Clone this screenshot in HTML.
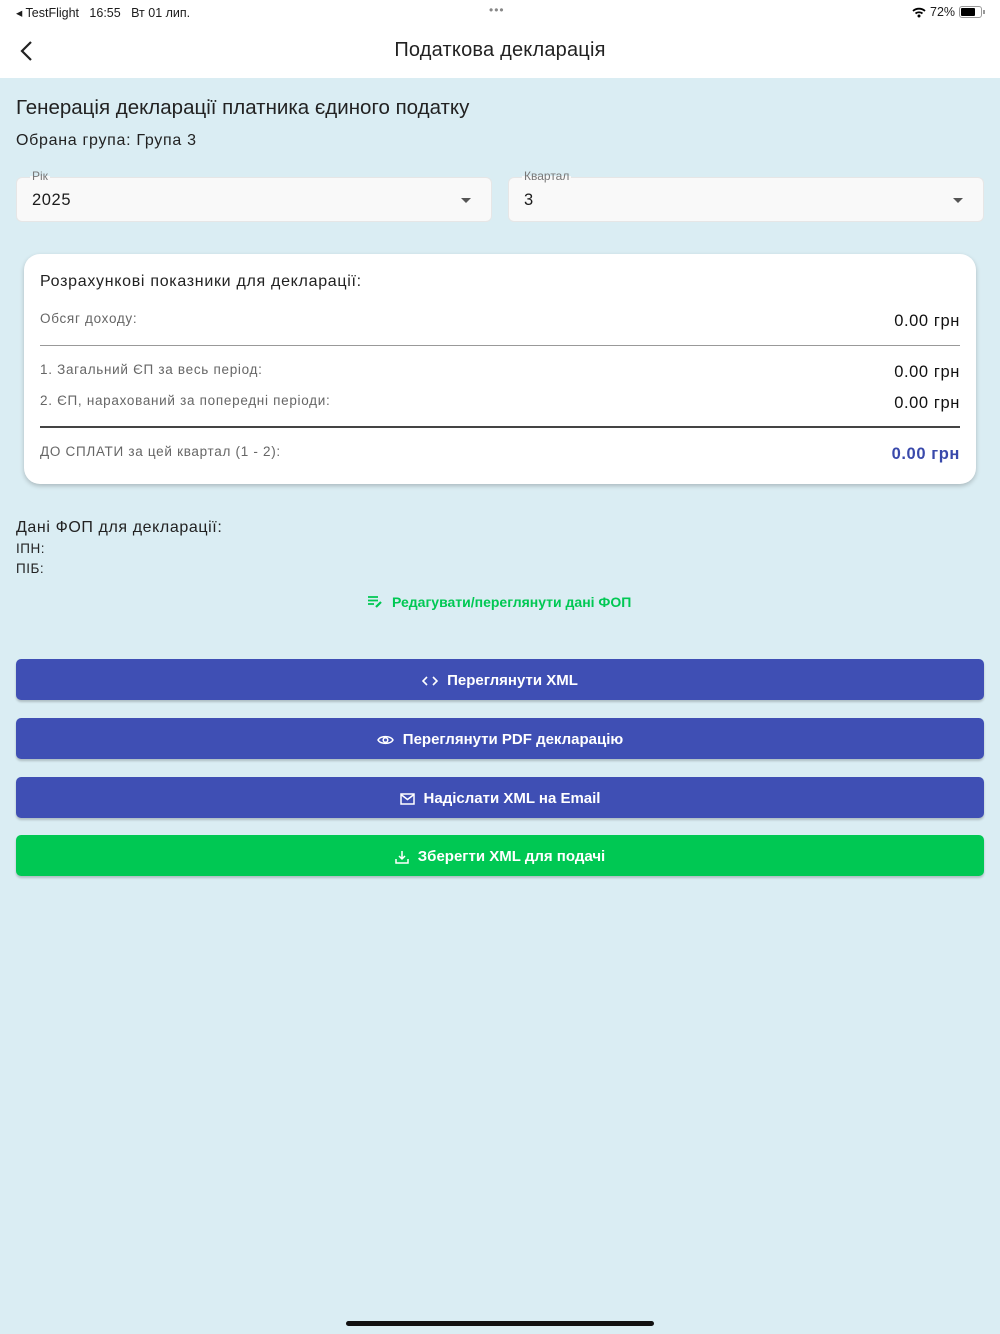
<!DOCTYPE html>
<html><head><meta charset="utf-8">
<style>
*{margin:0;padding:0;box-sizing:border-box}
body{width:1000px;height:1334px;background:#daedf3;font-family:"Liberation Sans","DejaVu Sans",sans-serif;position:relative;overflow:hidden;color:#1c1c1c}
.a{position:absolute;white-space:nowrap}
.hdr{position:absolute;left:0;top:0;width:1000px;height:78px;background:#fff}
.sel{position:absolute;top:177px;height:45px;background:#f9f9f9;border:1px solid #e6e6e6;border-radius:6px}
.lbl{position:absolute;top:-9px;font-size:12px;color:#777;background:linear-gradient(#daedf3 50%,#f9f9f9 50%);padding:0 2px}
.card{position:absolute;left:24px;top:254px;width:952px;height:230px;background:#fff;border-radius:16px;box-shadow:0 2px 5px rgba(0,0,0,.22)}
.btn{position:absolute;left:16px;width:968px;height:41px;border-radius:5px;background:#3f4fb4;color:#fff;font-weight:bold;font-size:15px;display:flex;align-items:center;justify-content:center;gap:9px;box-shadow:0 2px 2px rgba(0,0,0,.2);padding-top:2px}
.r{font-size:16.5px;color:#111;letter-spacing:.6px}
.g{font-size:13.5px;color:#666;letter-spacing:.7px}
</style></head><body>
<div class="hdr"></div>
<div class="a" style="left:16px;top:5px;font-size:12.5px">◂ TestFlight&nbsp;&nbsp; 16:55&nbsp;&nbsp; Вт 01 лип.</div>
<div class="a" style="left:489px;top:3px;font-size:12px;color:#888;letter-spacing:1px">•••</div>
<svg class="a" style="left:912px;top:7px" width="14" height="11" viewBox="0 0 14 11"><path d="M1 4a9 9 0 0 1 12 0M3.5 6.5a5.5 5.5 0 0 1 7 0" stroke="#000" stroke-width="1.8" fill="none"/><circle cx="7" cy="9" r="1.5"/></svg>
<div class="a" style="left:930px;top:5px;font-size:12.5px">72%</div>
<div class="a" style="left:959px;top:6px;width:23px;height:12px;border:1px solid #999;border-radius:3px;padding:1px"><div style="width:14px;height:8px;background:#000;border-radius:1px"></div></div>
<div class="a" style="left:983px;top:10px;width:2px;height:4px;background:#999"></div>
<svg class="a" style="left:20px;top:40px" width="14" height="22" viewBox="0 0 14 22"><path d="M11 2 2 11l9 9" stroke="#222" stroke-width="2.2" fill="none"/></svg>
<div class="a" style="left:0;width:1000px;text-align:center;top:39px;font-size:20px;color:#222;letter-spacing:.2px">Податкова декларація</div>

<div class="a" style="left:16px;top:96px;font-size:20.5px;color:#222">Генерація декларації платника єдиного податку</div>
<div class="a" style="left:16px;top:132px;font-size:16px;color:#222;letter-spacing:.7px">Обрана група: Група 3</div>

<div class="sel" style="left:16px;width:476px"><span class="lbl" style="left:13px">Рік</span><span class="a" style="left:15px;top:13px;font-size:16.5px;letter-spacing:.6px">2025</span><span class="a" style="right:20px;top:20px;border:5px solid transparent;border-top:5px solid #555"></span></div>
<div class="sel" style="left:508px;width:476px"><span class="lbl" style="left:13px">Квартал</span><span class="a" style="left:15px;top:13px;font-size:16.5px">3</span><span class="a" style="right:20px;top:20px;border:5px solid transparent;border-top:5px solid #555"></span></div>

<div class="card">
<div class="a" style="left:16px;top:19px;font-size:16px;color:#222;letter-spacing:.7px">Розрахункові показники для декларації:</div>
<div class="a g" style="left:16px;top:57px">Обсяг доходу:</div>
<div class="a r" style="right:16px;top:58px">0.00 грн</div>
<div class="a" style="left:16px;right:16px;top:91px;height:1px;background:#999"></div>
<div class="a g" style="left:16px;top:108px">1. Загальний ЄП за весь період:</div>
<div class="a r" style="right:16px;top:109px">0.00 грн</div>
<div class="a g" style="left:16px;top:139px">2. ЄП, нарахований за попередні періоди:</div>
<div class="a r" style="right:16px;top:140px">0.00 грн</div>
<div class="a" style="left:16px;right:16px;top:172px;height:2px;background:#444"></div>
<div class="a g" style="left:16px;top:190px">ДО СПЛАТИ за цей квартал (1 - 2):</div>
<div class="a r" style="right:16px;top:191px;color:#3949ab;font-weight:bold">0.00 грн</div>
</div>

<div class="a" style="left:16px;top:519px;font-size:16px;color:#222;letter-spacing:.6px">Дані ФОП для декларації:</div>
<div class="a" style="left:16px;top:541px;font-size:13.5px;color:#222;letter-spacing:.5px">ІПН:</div>
<div class="a" style="left:16px;top:561px;font-size:13.5px;color:#222;letter-spacing:.5px">ПІБ:</div>

<svg class="a" style="left:368px;top:596px" width="16" height="12" viewBox="0 0 16 12"><path d="M0 1h10M0 4.5h10M0 8h6" stroke="#00c853" stroke-width="1.8"/><path d="M8 11l5-5" stroke="#00c853" stroke-width="2.2"/></svg>
<div class="a" style="left:392px;top:594px;font-size:14px;font-weight:bold;color:#00c853">Редагувати/переглянути дані ФОП</div>

<div class="btn" style="top:659px"><svg width="16" height="12" viewBox="0 0 16 12"><path d="M5 2 1 6l4 4M11 2l4 4-4 4" stroke="#fff" stroke-width="1.6" fill="none"/></svg>Переглянути XML</div>
<div class="btn" style="top:718px"><svg width="17" height="12" viewBox="0 0 17 12"><path d="M1 6C3.5 1.5 13.5 1.5 16 6 13.5 10.5 3.5 10.5 1 6z" stroke="#fff" stroke-width="1.5" fill="none"/><circle cx="8.5" cy="6" r="2.3" stroke="#fff" stroke-width="1.5" fill="none"/></svg>Переглянути PDF декларацію</div>
<div class="btn" style="top:777px"><svg width="15" height="12" viewBox="0 0 15 12"><rect x="1" y="1" width="13" height="10" stroke="#fff" stroke-width="1.5" fill="none"/><path d="M1 1.5l6.5 5 6.5-5" stroke="#fff" stroke-width="1.5" fill="none"/></svg>Надіслати XML на Email</div>
<div class="btn" style="top:835px;background:#00c853"><svg width="14" height="14" viewBox="0 0 14 14"><path d="M7 1v8M4 6l3 3 3-3M1 9v4h12V9" stroke="#fff" stroke-width="1.5" fill="none"/></svg>Зберегти XML для подачі</div>

<div class="a" style="left:346px;top:1321px;width:308px;height:5px;border-radius:3px;background:#111"></div>
</body></html>
